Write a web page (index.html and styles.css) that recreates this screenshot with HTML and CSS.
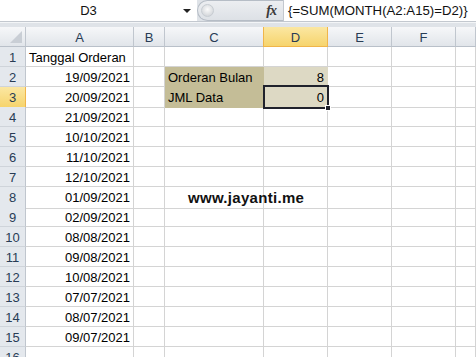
FILE: index.html
```html
<!DOCTYPE html>
<html>
<head>
<meta charset="utf-8">
<link rel="stylesheet" href="styles.css">
</head>
<body>
<div class="app">
  <div class="fbar">
    <div class="namebox"><span class="name">D3</span><span class="dd"></span></div>
    <div class="pill"><span class="knob"></span><span class="fx">fx</span></div>
    <div class="formula">{=SUM(MONTH(A2:A15)=D2)}</div>
  </div>
  <div class="gap"></div>
  <div class="sheet">
    <div class="row head">
      <div class="c corner"><span class="tri"></span></div>
      <div class="c ch">A</div><div class="c ch">B</div><div class="c ch">C</div><div class="c ch sel">D</div><div class="c ch">E</div><div class="c ch">F</div><div class="c ch"></div>
    </div>
    <div class="row"><div class="c rh">1</div><div class="c">Tanggal Orderan</div><div class="c"></div><div class="c"></div><div class="c"></div><div class="c"></div><div class="c"></div><div class="c"></div></div>
    <div class="row"><div class="c rh">2</div><div class="c r">19/09/2021</div><div class="c"></div><div class="c tan">Orderan Bulan</div><div class="c r tan2">8</div><div class="c"></div><div class="c"></div><div class="c"></div></div>
    <div class="row"><div class="c rh sel">3</div><div class="c r">20/09/2021</div><div class="c"></div><div class="c tan">JML Data</div><div class="c r tan2 active">0<span class="handle"></span></div><div class="c"></div><div class="c"></div><div class="c"></div></div>
    <div class="row"><div class="c rh">4</div><div class="c r">21/09/2021</div><div class="c"></div><div class="c"></div><div class="c"></div><div class="c"></div><div class="c"></div><div class="c"></div></div>
    <div class="row"><div class="c rh">5</div><div class="c r">10/10/2021</div><div class="c"></div><div class="c"></div><div class="c"></div><div class="c"></div><div class="c"></div><div class="c"></div></div>
    <div class="row"><div class="c rh">6</div><div class="c r">11/10/2021</div><div class="c"></div><div class="c"></div><div class="c"></div><div class="c"></div><div class="c"></div><div class="c"></div></div>
    <div class="row"><div class="c rh">7</div><div class="c r">12/10/2021</div><div class="c"></div><div class="c"></div><div class="c"></div><div class="c"></div><div class="c"></div><div class="c"></div></div>
    <div class="row"><div class="c rh">8</div><div class="c r">01/09/2021</div><div class="c"></div><div class="c over"><span class="site">www.jayanti.me</span></div><div class="c"></div><div class="c"></div><div class="c"></div><div class="c"></div></div>
    <div class="row"><div class="c rh">9</div><div class="c r">02/09/2021</div><div class="c"></div><div class="c"></div><div class="c"></div><div class="c"></div><div class="c"></div><div class="c"></div></div>
    <div class="row"><div class="c rh">10</div><div class="c r">08/08/2021</div><div class="c"></div><div class="c"></div><div class="c"></div><div class="c"></div><div class="c"></div><div class="c"></div></div>
    <div class="row"><div class="c rh">11</div><div class="c r">09/08/2021</div><div class="c"></div><div class="c"></div><div class="c"></div><div class="c"></div><div class="c"></div><div class="c"></div></div>
    <div class="row"><div class="c rh">12</div><div class="c r">10/08/2021</div><div class="c"></div><div class="c"></div><div class="c"></div><div class="c"></div><div class="c"></div><div class="c"></div></div>
    <div class="row"><div class="c rh">13</div><div class="c r">07/07/2021</div><div class="c"></div><div class="c"></div><div class="c"></div><div class="c"></div><div class="c"></div><div class="c"></div></div>
    <div class="row"><div class="c rh">14</div><div class="c r">08/07/2021</div><div class="c"></div><div class="c"></div><div class="c"></div><div class="c"></div><div class="c"></div><div class="c"></div></div>
    <div class="row"><div class="c rh">15</div><div class="c r">09/07/2021</div><div class="c"></div><div class="c"></div><div class="c"></div><div class="c"></div><div class="c"></div><div class="c"></div></div>
    <div class="row"><div class="c rh">16</div><div class="c"></div><div class="c"></div><div class="c"></div><div class="c"></div><div class="c"></div><div class="c"></div><div class="c"></div></div>
  </div>
</div>
</body>
</html>
```
FILE: styles.css
```css
* { box-sizing: border-box; }
html, body { margin: 0; padding: 0; }
body {
  width: 476px;
  height: 357px;
  overflow: hidden;
  background: #fff;
  font-family: "Liberation Sans", Arial, sans-serif;
  font-size: 13px;
  color: #000;
}
.app { display: flex; flex-direction: column; }

.fbar {
  height: 22px;
  display: flex;
  background: #dfe3e8;
  border-bottom: 1px solid #c3c8cf;
}
.namebox {
  width: 197px;
  background: #fff;
  display: flex;
  align-items: center;
  position: relative;
}
.name {
  flex: 1;
  text-align: center;
  padding-right: 6px;
  font-size: 13px;
  color: #111;
}
.dd {
  width: 0; height: 0;
  border-left: 4px solid transparent;
  border-right: 4px solid transparent;
  border-top: 4px solid #222;
  margin-right: 6px;
}
.pill {
  width: 86px;
  display: flex;
  align-items: center;
  border: 1px solid #b6bdc6;
  border-right: none;
  border-radius: 11px 0 0 11px;
  background: linear-gradient(#eceef1, #dde1e6);
  padding-left: 3px;
}
.knob {
  width: 13px; height: 13px;
  border-radius: 50%;
  background: radial-gradient(circle at 50% 40%, #fbfbfb, #c8ccd1);
  border: 1px solid #c7ccd2;
}
.fx {
  margin-left: auto;
  margin-right: 7px;
  font-family: "Liberation Serif", serif;
  font-style: italic;
  font-weight: bold;
  font-size: 14px;
  color: #3a3a3a;
  letter-spacing: -1px;
}
.formula {
  flex: 1;
  background: #fff;
  border-left: 1px solid #c3c8cf;
  padding-left: 4px;
  line-height: 21px;
  font-size: 13.2px;
  color: #111;
}
.gap {
  height: 5px;
  background: #dfe3e8;
  border-top: 1px solid #f3f5f7;
}

.sheet { display: flex; flex-direction: column; }
.row {
  display: grid;
  grid-template-columns: 26px 108px 31px 99px 64px 64px 64px 20px;
  height: 20px;
  flex: none;
}
.c {
  border-right: 1px solid #d4d4d4;
  border-bottom: 1px solid #d4d4d4;
  line-height: 19px;
  padding: 1px 3px 0;
  white-space: nowrap;
  overflow: hidden;
}
.c.r { text-align: right; }
.head .c {
  background: linear-gradient(#f6f7f9, #e1e5ea);
  border-right: 1px solid #c0c6ce;
  border-bottom: 1px solid #b9c0c9;
  text-align: center;
  color: #283c55;
  padding: 1px 0 0;
}
.head .c.sel {
  background: linear-gradient(#fbe7a2, #f6d46d);
  border-right: 1px solid #f0b54a;
  border-bottom: 1px solid #f0b54a;
  border-left: 1px solid #f0b54a;
  margin-left: -1px;
}
.corner { position: relative; }
.tri {
  position: absolute;
  right: 3px; bottom: 3px;
  width: 0; height: 0;
  border-left: 12px solid transparent;
  border-bottom: 12px solid #c9ced5;
}
.rh {
  background: #e4e8ed;
  border-right: 1px solid #c0c6ce !important;
  border-bottom: 1px solid #cfd4da !important;
  text-align: center;
  color: #283c55;
  padding: 1px 0 0 !important;
}
.rh.sel {
  background: linear-gradient(#fbe7a2, #f6d46d);
  border-right: 1px solid #f0b54a !important;
  border-bottom: 1px solid #f0b54a !important;
}
.tan {
  background: #c4bd97;
  border-color: #c4bd97;
}
.tan2 {
  background: #ddd9c4;
  border-right-color: #ddd9c4;
  border-bottom-color: #ddd9c4;
}
.active { position: relative; overflow: visible; z-index: 2; }
.active::after {
  content: "";
  position: absolute;
  left: -1px; top: -2px; right: -2px; bottom: -2px;
  border: 2px solid #20222c;
}
.handle {
  position: absolute;
  right: -4px; bottom: -4px;
  width: 6px; height: 6px;
  background: #20222c;
  border: 1px solid #fff;
  z-index: 3;
}
.over { overflow: visible; position: relative; z-index: 1; }
.site {
  display: inline-block;
  padding-left: 20px;
  font-weight: bold;
  font-size: 15px;
  letter-spacing: 0.3px;
  color: #111;
}
```
